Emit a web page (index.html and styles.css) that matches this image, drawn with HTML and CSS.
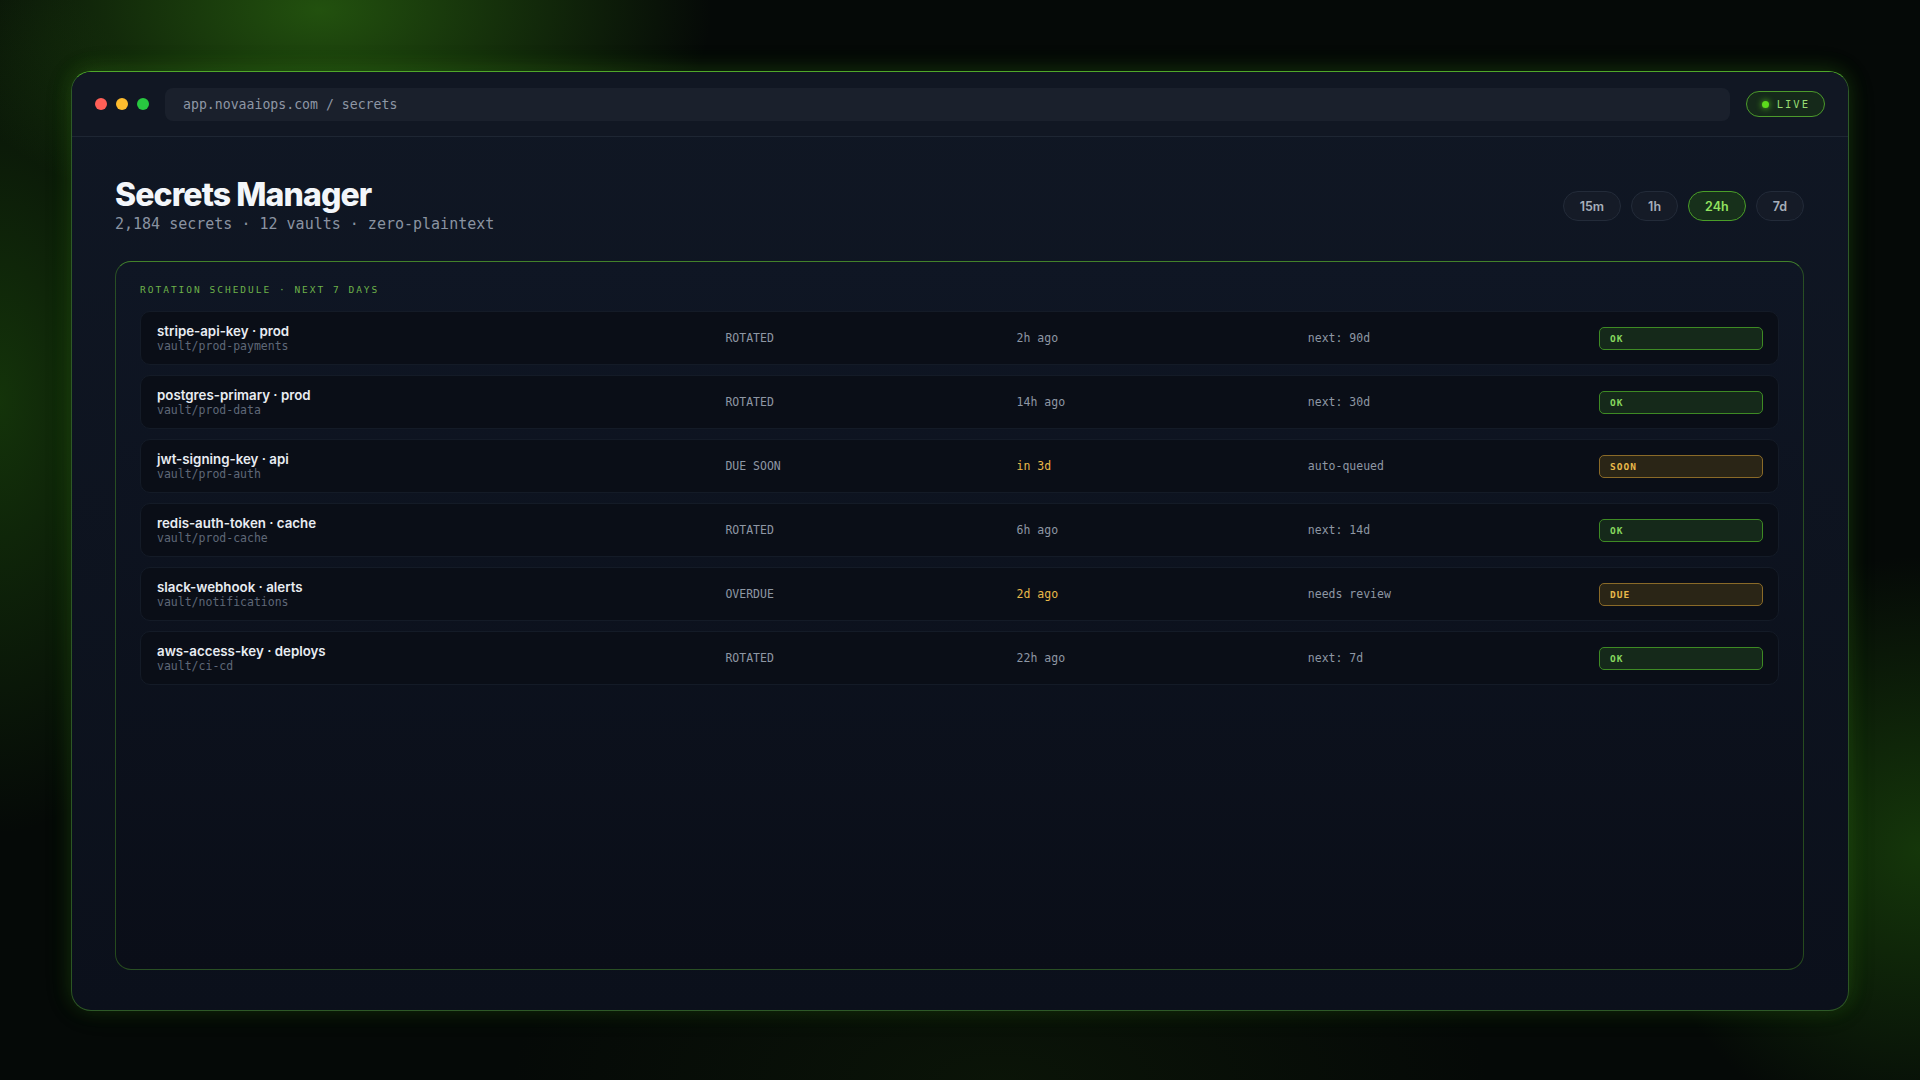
FILE: index.html
```html
<!DOCTYPE html>
<html lang="en">
<head>
    <meta charset="UTF-8">
    <meta name="viewport" content="width=device-width, initial-scale=1.0">
    <title>Secrets Manager</title>
    <link rel="stylesheet" href="styles.css">
</head>
<body>
    <div class="window">
        <div class="titlebar">
            <div class="dots">
                <span class="dot red"></span>
                <span class="dot yellow"></span>
                <span class="dot green"></span>
            </div>
            <div class="address">app.novaaiops.com / secrets</div>
            <div class="live"><span class="live-dot"></span>LIVE</div>
        </div>

        <div class="content">
            <div class="header">
                <div>
                    <h1 class="title">Secrets Manager</h1>
                    <div class="subtitle">2,184 secrets · 12 vaults · zero-plaintext</div>
                </div>
                <div class="ranges">
                    <button class="range">15m</button>
                    <button class="range">1h</button>
                    <button class="range active">24h</button>
                    <button class="range">7d</button>
                </div>
            </div>

            <div class="panel">
                <div class="panel-label">ROTATION SCHEDULE · NEXT 7 DAYS</div>
                <div class="rows">
                    <div class="row">
                        <div class="name">
                            <div class="key">stripe-api-key · prod</div>
                            <div class="vault">vault/prod-payments</div>
                        </div>
                        <div class="cell">ROTATED</div>
                        <div class="cell">2h ago</div>
                        <div class="cell">next: 90d</div>
                        <div class="badge ok">OK</div>
                    </div>
                    <div class="row">
                        <div class="name">
                            <div class="key">postgres-primary · prod</div>
                            <div class="vault">vault/prod-data</div>
                        </div>
                        <div class="cell">ROTATED</div>
                        <div class="cell">14h ago</div>
                        <div class="cell">next: 30d</div>
                        <div class="badge ok">OK</div>
                    </div>
                    <div class="row">
                        <div class="name">
                            <div class="key">jwt-signing-key · api</div>
                            <div class="vault">vault/prod-auth</div>
                        </div>
                        <div class="cell">DUE SOON</div>
                        <div class="cell warn">in 3d</div>
                        <div class="cell">auto-queued</div>
                        <div class="badge soon">SOON</div>
                    </div>
                    <div class="row">
                        <div class="name">
                            <div class="key">redis-auth-token · cache</div>
                            <div class="vault">vault/prod-cache</div>
                        </div>
                        <div class="cell">ROTATED</div>
                        <div class="cell">6h ago</div>
                        <div class="cell">next: 14d</div>
                        <div class="badge ok">OK</div>
                    </div>
                    <div class="row">
                        <div class="name">
                            <div class="key">slack-webhook · alerts</div>
                            <div class="vault">vault/notifications</div>
                        </div>
                        <div class="cell">OVERDUE</div>
                        <div class="cell warn">2d ago</div>
                        <div class="cell">needs review</div>
                        <div class="badge soon">DUE</div>
                    </div>
                    <div class="row">
                        <div class="name">
                            <div class="key">aws-access-key · deploys</div>
                            <div class="vault">vault/ci-cd</div>
                        </div>
                        <div class="cell">ROTATED</div>
                        <div class="cell">22h ago</div>
                        <div class="cell">next: 7d</div>
                        <div class="badge ok">OK</div>
                    </div>
                </div>
            </div>
        </div>
    </div>
</body>
</html>
```

FILE: styles.css
```css
html, body {
    height: 100%;
}
body {
    margin: 0;
    padding: 71px;
    box-sizing: border-box;
    font-family: Inter, "Noto Sans", sans-serif;
    color: #e6ebf2;
    background-color: #050907;
    background-image:
        radial-gradient(ellipse 560px 320px at 320px 10px, rgba(58, 140, 20, 0.55), transparent 70%),
        radial-gradient(ellipse 300px 620px at 0px 400px, rgba(40, 110, 14, 0.42), transparent 70%),
        radial-gradient(ellipse 400px 420px at 1920px 850px, rgba(40, 110, 14, 0.45), transparent 70%),
        radial-gradient(ellipse 700px 300px at 1000px 1080px, rgba(30, 60, 10, 0.22), transparent 70%);
}
.window {
    height: 100%;
    display: flex;
    flex-direction: column;
    border-radius: 20px;
    border: 1px solid rgba(86, 170, 48, 0.45);
    border-top-color: #4fa82a;
    background: linear-gradient(180deg, #101724 0%, #0b101b 100%);
    box-shadow: 0 0 30px rgba(60, 150, 20, 0.1), 0 -2px 20px rgba(90, 200, 40, 0.15);
    overflow: hidden;
}
.titlebar {
    height: 64px;
    flex-shrink: 0;
    display: flex;
    align-items: center;
    gap: 16px;
    padding: 0 23px;
    border-bottom: 1px solid #1e2633;
    background: #111723;
}
.dots {
    display: flex;
    gap: 9px;
}
.dot {
    width: 12px;
    height: 12px;
    border-radius: 50%;
}
.red { background: #ff5f57; }
.yellow { background: #febc2e; }
.green { background: #28c840; }
.address {
    flex: 1;
    height: 33px;
    display: flex;
    align-items: center;
    padding: 0 18px;
    border-radius: 8px;
    background: #1a202c;
    font-family: "DejaVu Sans Mono", monospace;
    font-size: 13.2px;
    color: #8e97a5;
}
.live {
    display: flex;
    align-items: center;
    gap: 8px;
    height: 26px;
    box-sizing: border-box;
    padding: 0 14px 0 15px;
    border-radius: 13px;
    border: 1px solid #4c9a2c;
    background: #15291a;
    font-family: "DejaVu Sans Mono", monospace;
    font-size: 10.5px;
    letter-spacing: 2px;
    color: #96dc73;
}
.live-dot {
    width: 7px;
    height: 7px;
    border-radius: 50%;
    background: #5ddc1c;
    box-shadow: 0 0 6px #5ddc1c;
}
.content {
    flex: 1;
    display: flex;
    flex-direction: column;
    padding: 39px 44px 40px 43px;
    min-height: 0;
}
.header {
    display: flex;
    justify-content: space-between;
    align-items: center;
    margin-bottom: 28px;
}
.title {
    margin: 0;
    font-size: 32px;
    font-weight: 800;
    letter-spacing: -0.9px;
    line-height: 38px;
    color: #f3f6fa;
}
.subtitle {
    font-family: "DejaVu Sans Mono", monospace;
    font-size: 15px;
    color: #8a93a1;
    margin-top: 1px;
}
.ranges {
    display: flex;
    gap: 10px;
    margin-top: 3px;
}
.range {
    height: 30px;
    padding: 0 16px;
    border-radius: 15px;
    border: 1px solid #232b39;
    background: #151b27;
    color: #a7afbb;
    font-family: Inter, sans-serif;
    font-size: 12.5px;
    font-weight: 600;
}
.range.active {
    border-color: #4a9e28;
    background: #17301b;
    color: #92e35f;
}
.panel {
    flex: 1;
    border-radius: 16px;
    border: 1px solid rgba(74, 150, 40, 0.45);
    border-top-color: rgba(90, 180, 50, 0.7);
    background: linear-gradient(180deg, #0f1624 0%, #0a0e18 100%);
    padding: 22px 24px;
}
.panel-label {
    font-family: "DejaVu Sans Mono", monospace;
    font-size: 9.5px;
    letter-spacing: 2px;
    color: #6db24a;
    margin-bottom: 16px;
}
.rows {
    display: flex;
    flex-direction: column;
    gap: 10px;
}
.row {
    display: grid;
    grid-template-columns: 2fr 1fr 1fr 1fr 164px;
    gap: 14px;
    align-items: center;
    height: 54px;
    box-sizing: border-box;
    padding: 0 15px 0 16px;
    border-radius: 10px;
    border: 1px solid #141b27;
    background: #0a0e17;
}
.key {
    font-size: 13.3px;
    font-weight: 600;
    color: #e8ecf2;
    line-height: 16px;
}
.vault {
    font-family: "DejaVu Sans Mono", monospace;
    font-size: 11.5px;
    color: #5f6877;
    line-height: 14px;
}
.cell {
    font-family: "DejaVu Sans Mono", monospace;
    font-size: 11.5px;
    color: #8e97a4;
}
.cell.warn {
    color: #e9b949;
}
.badge {
    height: 23px;
    box-sizing: border-box;
    display: flex;
    align-items: center;
    padding: 0 10px;
    border-radius: 5px;
    font-family: "DejaVu Sans Mono", monospace;
    font-size: 9.5px;
    font-weight: bold;
    letter-spacing: 1px;
}
.badge.ok {
    border: 1px solid #3e8a24;
    background: #15291a;
    color: #86d85e;
}
.badge.soon {
    border: 1px solid #8a6a28;
    background: #2a2516;
    color: #e8b84a;
}
```
